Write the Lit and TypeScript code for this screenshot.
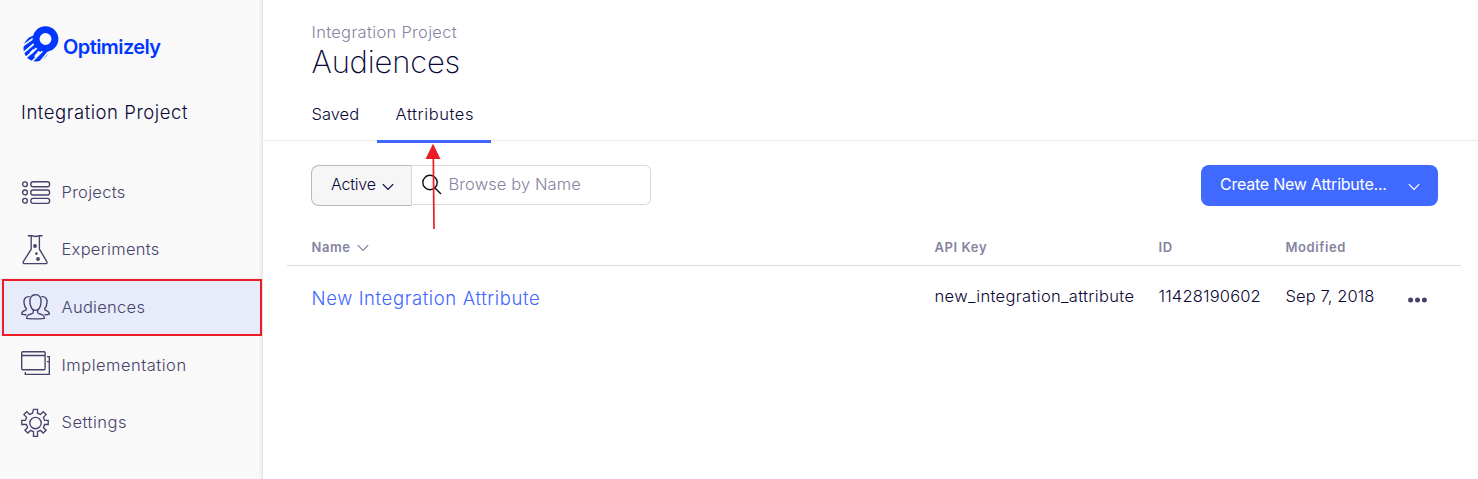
import { LitElement, html, svg, css } from "lit";
import { customElement } from "lit/decorators.js";
import { classMap } from "lit/directives/class-map.js";

const icons: Record<string, unknown> = {
  projects: svg`
    <circle cx="4" cy="7.200" r="2.400"/><circle cx="4" cy="15.400" r="2.400"/><circle cx="4" cy="23.700" r="2.400"/>
    <rect x="9.800" y="4.700" width="18.800" height="5" rx="2.300"/>
    <rect x="9.800" y="13" width="18.800" height="5" rx="2.300"/>
    <rect x="9.800" y="21.300" width="18.800" height="5" rx="2.300"/>`,
  experiments: svg`
    <path d="M6.800.7H11q3.500 1.600 7 0h3.500M10.200 1v13.200L2.500 26.300q-1 2.400 1.200 2.400h20.800q2.200 0 1.200-2.400L18.400 14.200V1"/>
    <circle class="solid" cx="14" cy="11" r="1.900"/><circle class="solid" cx="15.400" cy="18.600" r="1.300"/><circle class="solid" cx="17" cy="24" r="1.900"/>`,
  audiences: svg`
    <g transform="translate(0 1)">
    <path d="M14.500 1.700c-4.200 0-6 3.200-5.600 7.400.4 4.600 2.400 8.200 5.600 8.200s5.200-3.600 5.600-8.200c.4-4.200-1.400-7.400-5.600-7.400z"/>
    <path d="M12.300 16.800v2.400q0 1.300-2.300 1.800c-3 .7-4.300 1.300-4.300 4.300q8.800 1.200 17.600 0c0-3-1.300-3.600-4.300-4.300q-2.300-.5-2.300-1.800v-2.400"/>
    <path d="M8.600 3.700C4.800 3.300 2.600 5.500 3 9.600c.2 2.600 1 4.700 2.400 5.900 0 1.600-.7 2-2.200 2.400C1.200 18.500.7 19.200.7 21.100q2.300.7 4.800.6"/>
    <path d="M20.400 3.700c3.800-.4 6 1.800 5.600 5.900-.2 2.600-1 4.700-2.400 5.900 0 1.600.7 2 2.200 2.400 2 .6 2.500 1.300 2.500 3.200q-2.300.7-4.800.6"/>
    </g>`,
  implementation: svg`
    <rect x=".7" y="1.700" width="23.400" height="18" rx="1"/><path d="M.7 5.500h23.400M26 6.600h2.300v17.700H4.300v-2.200M26 11.600h2.300"/>`,
  settings: svg`
    <circle cx="14.500" cy="15" r="5.700"/>
    <path d="M12.500 1.300h4v3.900l2.900 1.200 2.800-2.700 2.900 2.900-2.700 2.800 1.200 2.900h3.600v4.200h-3.600l-1.200 3 2.700 2.700-2.900 2.900-2.800-2.700-2.900 1.200v4.800h-4v-4.800l-2.900-1.200-2.800 2.700-2.900-2.900 2.700-2.700-1.200-3H.8v-4.200h3.600l1.200-2.900-2.700-2.800 2.900-2.900 2.800 2.700 2.900-1.200z"/>`,
};

const navItems = [
  { id: "projects", label: "Projects" },
  { id: "experiments", label: "Experiments" },
  { id: "audiences", label: "Audiences" },
  { id: "implementation", label: "Implementation" },
  { id: "settings", label: "Settings" },
];

const chevron = html`<svg class="chevron" width="12" height="8" viewBox="0 0 12 8"><path d="M.8 1.200 6 6.500l5.200-5.300"/></svg>`;

@customElement("side-nav")
class SideNav extends LitElement {
  static styles = css`
    :host { display: flex; flex-direction: column; box-sizing: border-box; width: 263px; flex: none; background: #f9f9f9; border-right: 1px solid #e4e4e6; box-shadow: inset -3px 0 2px -1px #efeff0; }
    .logo { display: flex; align-items: center; height: 36px; margin: 26px 0 0 23px; color: #0037ff; }
    .word { font-size: 20px; line-height: 24px; font-weight: 580; letter-spacing: -0.58px; margin: 6px 0 0 4px; }
    .project { margin: 38px 0 0 21px; font-size: 18.500px; line-height: 24px; font-weight: 300; letter-spacing: 0.55px; color: #080736; white-space: nowrap; }
    .nav { display: flex; flex-direction: column; margin-top: 39px; }
    .item { display: flex; align-items: center; height: 57.600px; padding-left: 21px; gap: 11.500px; color: #45426b; font-size: 16.500px; font-weight: 300; letter-spacing: 0.28px; }
    .implementation, .settings { letter-spacing: 0.5px; }
    .active { background: #e8ecfa; }
    .icon { width: 29px; height: 29px; overflow: visible; fill: none; stroke: #45426b; stroke-width: 1.350; }
    .solid { fill: #45426b; stroke: none; }
  `;
  render() {
    return html`
      <div class="logo">
        <svg width="36" height="36" viewBox="0 0 36 36">
          <path fill="currentColor" d="M10.500 9.500C4 11.500.5 17 .5 22.500c0 7 5.500 13 12.500 13 6 0 11-4 12.500-10z"/>
          <path d="M-1 20.500 10 12.500M-.5 27.500 12.500 16.500M3 31.500 15.500 20.500M9 35.500 20.500 24M17 36 26 25" stroke="#f9f9f9" stroke-width="1.700"/>
          <path d="M7.500 27.500 11 24M12 31 16.500 25.500" stroke="#f9f9f9" stroke-width="2.500"/>
          <circle cx="22.500" cy="13" r="9.400" fill="#f9f9f9" stroke="currentColor" stroke-width="6.900"/>
        </svg>
        <span class="word">Optimizely</span>
      </div>
      <div class="project">Integration Project</div>
      <nav class="nav">
        ${navItems.map((n) => html`
          <div class=${classMap({ item: true, [n.id]: true, active: n.id === "audiences" })}>
            <svg class="icon" viewBox="0 0 29 29">${icons[n.id]}</svg>
            <span class="label">${n.label}</span>
          </div>`)}
      </nav>`;
  }
}

@customElement("app-root")
class AppRoot extends LitElement {
  static styles = css`
    :host { display: flex; position: relative; width: 1478px; height: 479px; overflow: hidden; background: #fff; color: #080736; font-family: Inter, "Liberation Sans", sans-serif; font-size: 16px; font-weight: 300; }
    .main { flex: 1; min-width: 0; white-space: nowrap; }
    .head { box-sizing: border-box; height: 141px; padding: 20px 0 0 48.500px; border-bottom: 1px solid #ebebed; }
    .crumb { line-height: 24px; font-size: 16.500px; letter-spacing: 0.31px; color: #8583a1; }
    .title { margin: 0; font-size: 31px; line-height: 36px; font-weight: 200; letter-spacing: -0.2px; }
    .tabs { display: flex; margin-top: 8px; font-size: 16.500px; font-weight: 330; }
    .tab { box-sizing: border-box; width: 65.500px; height: 55px; line-height: 52px; letter-spacing: 0; }
    .current { width: 114px; padding-left: 18.500px; border-bottom: 3px solid #3f66ff; letter-spacing: 0.58px; }
    .tools { display: flex; align-items: flex-start; margin: 24px 40px 0 48px; }
    .filter { box-sizing: border-box; display: flex; align-items: center; width: 101px; height: 41px; padding: 0 0 3px 19px; gap: 6px; background: #f6f6f7; border: 1px solid #b9b9bd; border-right-color: #d8d8dc; border-radius: 8px 0 0 8px; font-weight: 350; letter-spacing: -0.2px; }
    .search { box-sizing: border-box; display: flex; align-items: center; width: 239px; height: 40px; padding: 0 0 2px 9px; gap: 5.500px; border: 1px solid #d9d9dc; border-left: 0; border-radius: 0 6px 6px 0; color: #8583a1; font-size: 16.500px; letter-spacing: 0.1px; }
    .glass { fill: none; stroke: #111; stroke-width: 1.400; }
    .create { box-sizing: border-box; display: flex; align-items: center; justify-content: space-between; width: 237px; height: 41px; margin-left: auto; padding: 0 18px 3px 19px; border-radius: 8px; background: #3f69ff; color: #fff; font-weight: 400; letter-spacing: -0.23px; }
    .chevron { fill: none; stroke: currentColor; stroke-width: 1.200; position: relative; top: 3px; }
    .table { display: grid; grid-template-columns: 623px 224px 127px 122px 78px; margin: 23px 17px 0 24px; }
    .cell { padding-left: 24.500px; }
    .th { height: 36px; line-height: 36px; border-bottom: 1px solid #dcdce0; font-size: 13px; font-weight: 600; letter-spacing: 0.6px; color: #8583a1; }
    .th .chevron { top: 0; margin-left: 2px; }
    .td { line-height: 24px; padding-top: 18px; font-size: 16.500px; letter-spacing: 0.34px; }
    .link { color: #3f66ff; font-size: 18.500px; padding-top: 20px; letter-spacing: 0.61px; }
    .id { letter-spacing: 0.18px; }
    .date { letter-spacing: 0.1px; }
    .more { padding: 31px 0 0 25px; line-height: 0; }
    .mark { position: absolute; box-sizing: border-box; left: 2px; top: 279px; width: 260px; height: 57px; border: 2px solid #ec1c24; }
    .arrow { position: absolute; left: 424px; top: 143px; }
  `;
  render() {
    return html`
      <side-nav></side-nav>
      <main class="main">
        <header class="head">
          <div class="crumb">Integration Project</div>
          <h1 class="title">Audiences</h1>
          <div class="tabs">
            <div class="tab">Saved</div>
            <div class="tab current">Attributes</div>
          </div>
        </header>
        <div class="tools">
          <div class="filter"><span>Active</span>${chevron}</div>
          <div class="search">
            <svg class="glass" width="22" height="22" viewBox="0 0 22 22"><circle cx="9" cy="9.500" r="7.200"/><path d="m14 15 6 6"/></svg>
            <span>Browse by Name</span>
          </div>
          <div class="create"><span>Create New Attribute...</span>${chevron}</div>
        </div>
        <div class="table">
          <div class="cell th">Name ${chevron}</div>
          <div class="cell th">API Key</div>
          <div class="cell th">ID</div>
          <div class="cell th">Modified</div>
          <div class="cell th"></div>
          <div class="cell td link">New Integration Attribute</div>
          <div class="cell td">new_integration_attribute</div>
          <div class="cell td id">11428190602</div>
          <div class="cell td date">Sep 7, 2018</div>
          <div class="more"><svg width="20" height="6" viewBox="0 0 20 6" fill="#45426b"><circle cx="2.600" cy="3" r="2.500"/><circle cx="9.500" cy="3" r="2.500"/><circle cx="16.400" cy="3" r="2.500"/></svg></div>
        </div>
      </main>
      <div class="mark"></div>
      <svg class="arrow" width="18" height="86" viewBox="0 0 18 86"><path d="M9.300 12 10 86" stroke="#ec1c24" stroke-width="1.700"/><path d="M9 .8 16.500 16h-15z" fill="#ec1c24"/></svg>`;
  }
}
